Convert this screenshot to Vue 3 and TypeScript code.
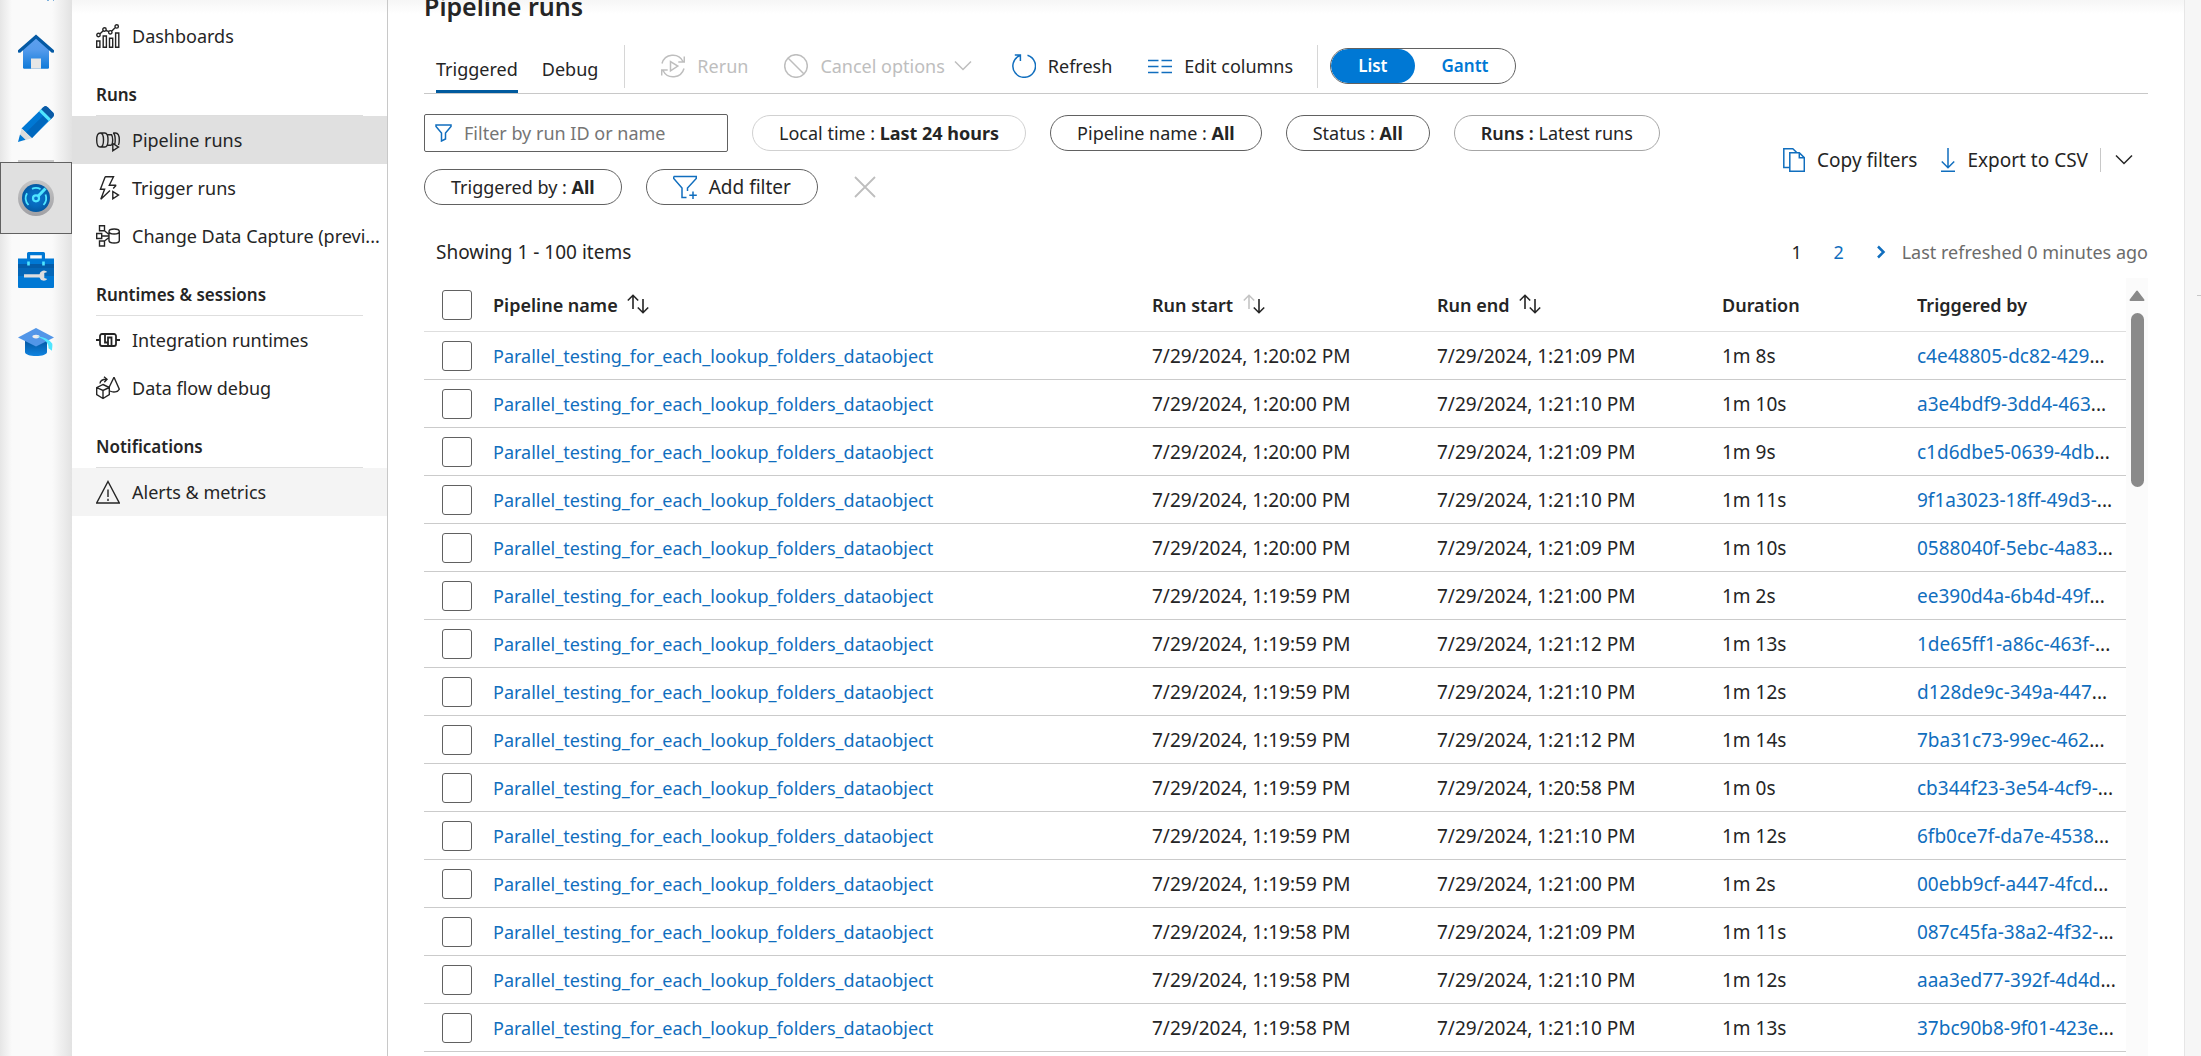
<script setup lang="ts">
import { ref } from 'vue'

interface NavItem {
  label: string
  icon: string
  state?: string
}
interface NavGroup {
  title: string
  items: NavItem[]
}
interface Run {
  start: string
  end: string
  duration: string
  trigger: string
}

const pipeline = 'Parallel_testing_for_each_lookup_folders_dataobject'

const icons: Record<string, string> = {
  dashboards:
    'M.7 17h3.200v6.300H.7zM7.200 12h3.200v11.300H7.200zM13.500 14.300h3.200v9H13.500zM19.600 9h3.200v14.300h-3.200zM4.200 11a1.700 1.700 0 1 1-3.400 0 1.700 1.700 0 0 1 3.400 0zM10.200 5.500a1.700 1.700 0 1 1-3.400 0 1.700 1.700 0 0 1 3.400 0zM16 8.300a1.700 1.700 0 1 1-3.400 0 1.700 1.700 0 0 1 3.400 0zM22.400 2.400a1.700 1.700 0 1 1-3.400 0 1.700 1.700 0 0 1 3.400 0zM3.800 9.900l3.400-3.200M10 6.300l2.800 1.300M15.600 7.200l3.700-3.600',
  pipeline:
    'M4.200 5C6.200 5 7.500 8 7.500 12s-1.300 7-3.300 7S.7 16 .7 12 2.200 5 4.200 5zM4.200 5h4.600c2 0 3.200 3 3.200 7s-1.200 7-3.200 7H4.200M10.800 6.800h5.400M10.800 17.200h4.600M19.500 5h-2.300c1.600.8 2 3.600 2 7 0 1.700-.1 3-.4 4M15.500 6.800c1 1.200 1.200 3 1.200 5.200s-.2 4-1.200 5.200M19.500 5c2.600 0 3.800 3 3.800 7 0 2-.2 3.600-.8 5M16.800 15.500v7.300l5.700-3.700z',
  trigger: 'M9.200.7h8.300l-4.200 8.500h6.900M9.200.7 4.400 13.300h4.200L4.800 23.200 14 14.500M20.200 9.200l-3 3.200M16.800 15.500v7.300l5.700-3.700z',
  capture:
    'M3.500 1.800h5v5h-5zM.7 9.500h5v5h-5zM3.500 17h5v5h-5zM8.500 6.800l4.500 3.700M5.700 12H13M8.500 17l4.500-3.500M13 7.500c0-1.600 2.300-2.500 5.200-2.500s5.100.9 5.100 2.500-2.200 2.500-5.100 2.500S13 9.100 13 7.500v9c0 1.600 2.300 2.500 5.200 2.500s5.100-.9 5.100-2.500v-9',
  integration:
    'M0 12h4M20 12h4M9 6H6a2 2 0 0 0-2 2v8a2 2 0 0 0 2 2h6v-3.500H9zM9 6h6M12 14.500V9.500h3.500V18M12 18h6a2 2 0 0 0 2-2V8a2 2 0 0 0-2-2h-3',
  dataflow:
    'M7 8.500l6.300 3v7L7 22.500l-6.300-3.800v-7zM.7 11.600 7 14.500l6.300-3M7 14.500v8M4 7.500c.2-2.800 2-4.300 6.800-4.200M8 .8l3 2.500L8.300 6.200M18 1.200l-5 10.300M18 1.200l5.300 12c-1.500 3-6 3.600-9.300 1.800',
  alerts: 'M12 1.500 23.300 23H.7zM12 9.500v7.500M12 18.700v2.200',
}

const groups: NavGroup[] = [
  {
    title: 'Runs',
    items: [
      { label: 'Pipeline runs', icon: 'pipeline', state: 'selected' },
      { label: 'Trigger runs', icon: 'trigger' },
      { label: 'Change Data Capture (previ...', icon: 'capture' },
    ],
  },
  {
    title: 'Runtimes & sessions',
    items: [
      { label: 'Integration runtimes', icon: 'integration', state: 'bold-icon' },
      { label: 'Data flow debug', icon: 'dataflow' },
    ],
  },
  {
    title: 'Notifications',
    items: [{ label: 'Alerts & metrics', icon: 'alerts', state: 'hovered' }],
  },
]

const source: [string, string, string, string][] = [
  ['1:20:02', '1:21:09', '1m 8s', 'c4e48805-dc82-429'],
  ['1:20:00', '1:21:10', '1m 10s', 'a3e4bdf9-3dd4-463'],
  ['1:20:00', '1:21:09', '1m 9s', 'c1d6dbe5-0639-4db'],
  ['1:20:00', '1:21:10', '1m 11s', '9f1a3023-18ff-49d3-'],
  ['1:20:00', '1:21:09', '1m 10s', '0588040f-5ebc-4a83'],
  ['1:19:59', '1:21:00', '1m 2s', 'ee390d4a-6b4d-49f'],
  ['1:19:59', '1:21:12', '1m 13s', '1de65ff1-a86c-463f-'],
  ['1:19:59', '1:21:10', '1m 12s', 'd128de9c-349a-447'],
  ['1:19:59', '1:21:12', '1m 14s', '7ba31c73-99ec-462'],
  ['1:19:59', '1:20:58', '1m 0s', 'cb344f23-3e54-4cf9-'],
  ['1:19:59', '1:21:10', '1m 12s', '6fb0ce7f-da7e-4538'],
  ['1:19:59', '1:21:00', '1m 2s', '00ebb9cf-a447-4fcd'],
  ['1:19:58', '1:21:09', '1m 11s', '087c45fa-38a2-4f32-'],
  ['1:19:58', '1:21:10', '1m 12s', 'aaa3ed77-392f-4d4d'],
  ['1:19:58', '1:21:10', '1m 13s', '37bc90b8-9f01-423e'],
]
const runs: Run[] = source.map(([start, end, duration, trigger]) => ({
  start: `7/29/2024, ${start} PM`,
  end: `7/29/2024, ${end} PM`,
  duration,
  trigger,
}))

const filterText = ref('')
const view = ref('List')
</script>

<template>
  <div class="app">
    <nav class="rail" aria-label="Hubs">
      <button class="expand" aria-label="Expand">
        <svg width="36" height="2" viewBox="0 0 36 2"><path d="M29 0h2v1h-2zM35 0h1v1h-1z" fill="#7fb2dd" /></svg>
      </button>
      <button class="hub" aria-label="Home">
        <svg width="36" height="36" viewBox="0 0 36 36">
          <defs>
            <linearGradient id="gHome" x1="0" y1="0" x2="0" y2="1"><stop offset="0" stop-color="#5ea0ef" /><stop offset=".4" stop-color="#559bec" /><stop offset="1" stop-color="#0f7ad8" /></linearGradient>
          </defs>
          <path d="M5 15 18 3l13 12v18.500a1.200 1.200 0 0 1-1.200 1.200H6.200A1.200 1.200 0 0 1 5 33.500z" fill="url(#gHome)" />
          <path d="M18 .4 36 16.200v2.300l-2.200.3L18 4.800 2.200 18.800 0 18.500v-2.300z" fill="#0459a4" />
          <path d="M13 24.500h10v10.200H13z" fill="#e6e6e6" />
        </svg>
      </button>
      <button class="hub" aria-label="Author">
        <svg width="36" height="36" viewBox="0 0 36 36">
          <path d="M3.500 22.500 25 1.500a4 4 0 0 1 5 0l5 5a3.800 3.800 0 0 1 0 4.500L14 32z" fill="#0078d4" />
          <path d="M8 26.500 30.500 4.500l4.500 4.500-21 23z" fill="#0067bd" />
          <path d="M23 3.500 25.500 1a3 3 0 0 1 4 0L35 6.500a3 3 0 0 1 0 4.500l-2.500 2.500z" fill="#0a5aa5" />
          <path d="M21 5.500 23.200 3.200 33 13l-2.200 2.300z" fill="#50e6ff" />
          <path d="M3.600 22.300 14 32.200 6 34.500 1.800 30z" fill="#dcdcdc" />
          <path d="M2 28.500 7.500 33.800 0 36z" fill="#0078d4" />
        </svg>
      </button>
      <span class="rail-line"></span>
      <button class="hub current" aria-label="Monitor">
        <svg width="36" height="36" viewBox="0 0 36 36">
          <defs>
            <linearGradient id="gRing" x1="0" y1="0" x2="0" y2="1"><stop offset="0" stop-color="#c6c6c6" /><stop offset="1" stop-color="#a0a0a4" /></linearGradient>
            <radialGradient id="gDial"><stop offset="0" stop-color="#0b76cf" /><stop offset=".6" stop-color="#0669bb" /><stop offset="1" stop-color="#0459a2" /></radialGradient>
          </defs>
          <circle cx="18" cy="18" r="18" fill="url(#gRing)" />
          <circle cx="18" cy="18" r="14" fill="url(#gDial)" />
          <g fill="none" stroke="#50e6ff">
            <path d="M10.500 25A10.200 10.200 0 0 1 9 13.200M14 8.800a10.200 10.200 0 0 1 8.500.3M27.500 14.500A10.200 10.200 0 0 1 25.500 25" stroke-width="1.800" />
            <circle cx="18" cy="18.300" r="3" stroke-width="2.200" />
            <path d="M20 16.300 27.500 8.500" stroke-width="3" />
          </g>
        </svg>
      </button>
      <button class="hub" aria-label="Manage">
        <svg width="36" height="36" viewBox="0 0 36 36">
          <path d="M9 7V1.500A1.500 1.500 0 0 1 10.500 0h15A1.500 1.500 0 0 1 27 1.500V7h-3.200V3.200H12.200V7z" fill="#0078d4" />
          <path d="M0 6.500h36V35a1 1 0 0 1-1 1H1a1 1 0 0 1-1-1z" fill="#0078d4" />
          <path d="M0 12h36v12H0z" fill="#0467b8" />
          <path d="M0 12h36v4H0z" fill="#045ca8" />
          <path d="M9.200 9.500h2.600v4H9.200zM24.200 9.500h2.600v4h-2.600z" fill="#50e6ff" />
          <path d="M6 22.200h15.500a4.500 4.500 0 0 1 7.800-2.200l-3 1v5l3 1a4.500 4.500 0 0 1-7.800-1.500H6z" fill="#dedede" />
        </svg>
      </button>
      <button class="hub" aria-label="Learning center">
        <svg width="36" height="36" viewBox="0 0 36 36">
          <defs>
            <linearGradient id="gCap" x1="0" y1="0" x2="0" y2="1"><stop offset="0" stop-color="#0459a4" /><stop offset="1" stop-color="#0f83e0" /></linearGradient>
          </defs>
          <path d="M7 17h22v11c0 2.500-5 4-11 4S7 30.500 7 28z" fill="url(#gCap)" />
          <path d="M18 4 36 13.500 18 22.500 0 13.500z" fill="#5296e8" />
          <ellipse cx="18" cy="12.600" rx="3.600" ry="1.800" fill="#eee" />
          <path d="M18.500 12.400c7 .2 13 3 15.800 7.300.4 2.500-.3 4.300-.3 7l-3.500-2.500c.5-4.500-3-9.500-12-11.800z" fill="#50e6ff" />
        </svg>
      </button>
    </nav>

    <nav class="side" aria-label="Monitor">
      <a href="#" class="side-link">
        <svg class="side-icon" viewBox="0 0 24 24"><path :d="icons.dashboards" /></svg>
        <span>Dashboards</span>
      </a>
      <section v-for="group in groups" :key="group.title">
        <h2>{{ group.title }}</h2>
        <a v-for="item in group.items" :key="item.label" href="#" class="side-link" :class="item.state">
          <svg class="side-icon" viewBox="0 0 24 24"><path :d="icons[item.icon]" /></svg>
          <span>{{ item.label }}</span>
        </a>
      </section>
    </nav>

    <main class="main">
      <h1><span>Pipeline runs</span></h1>

      <div class="toolbar">
        <div class="tabs" role="tablist">
          <button role="tab" class="tab active" aria-selected="true">Triggered</button>
          <button role="tab" class="tab" aria-selected="false">Debug</button>
        </div>
        <span class="divider"></span>
        <div class="commands">
          <button class="command" disabled>
            <svg width="24" height="24" viewBox="0 0 24 24"><path d="M1 9.500A11.300 11.300 0 0 1 22 7.500M23.300 2.500V8h-6M23 14.500A11.300 11.300 0 0 1 2 16.500M.7 21.500V16h6M9.500 7.500v9.300l7.300-4.700z" /></svg>
            <span>Rerun</span>
          </button>
          <button class="command" disabled>
            <svg width="24" height="24" viewBox="0 0 24 24"><path d="M23.300 12a11.300 11.300 0 1 1-22.600 0 11.300 11.300 0 0 1 22.600 0zM4 4l16 16" /></svg>
            <span>Cancel options</span>
            <svg class="caret" width="18" height="12" viewBox="0 0 18 12"><path d="M1 1.500 9 9.500l8-8" /></svg>
          </button>
          <button class="command accent">
            <svg width="24" height="24" viewBox="0 0 24 24"><path d="M15.500 1.200A11.300 11.300 0 1 1 8 1.500M2.800 1h5.600v6" /></svg>
            <span>Refresh</span>
          </button>
          <button class="command accent">
            <svg width="24" height="24" viewBox="0 0 24 24"><path d="M0 6.500h10.500M13.500 6.500H24M0 12.500h10.500M13.500 12.500H24M0 18.500h10.500M13.500 18.500H24" /></svg>
            <span>Edit columns</span>
          </button>
        </div>
        <span class="divider"></span>
        <div class="switch">
          <button v-for="name in ['List', 'Gantt']" :key="name" :class="{ on: view === name }" @click="view = name">{{ name }}</button>
        </div>
      </div>

      <div class="filters">
        <div class="pills">
          <label class="search">
            <svg width="17" height="18" viewBox="0 0 17 18"><path d="M1 1h15v1.500L10.500 9v6L6.500 17V9L1 2.500z" /></svg>
            <input v-model="filterText" type="text" placeholder="Filter by run ID or name" aria-label="Filter by run ID or name" />
          </label>
          <button class="pill light">Local time : <b>Last 24 hours</b></button>
          <button class="pill">Pipeline name : <b>All</b></button>
          <button class="pill">Status : <b>All</b></button>
          <button class="pill medium"><strong>Runs :</strong> Latest runs</button>
          <button class="pill">Triggered by : <b>All</b></button>
          <button class="pill add">
            <svg width="24" height="24" viewBox="0 0 24 24"><path d="M.7 1.500h22.600v2L14.500 13v3M.7 1.500v2L9 13v9.500h4.500M20 16.500V24M16.300 20.200h7.500" /></svg>
            <span>Add filter</span>
          </button>
          <button class="clear" aria-label="Clear filters">
            <svg width="22" height="22" viewBox="0 0 22 22"><path d="M1 1l20 20M21 1 1 21" /></svg>
          </button>
        </div>
        <div class="actions">
          <button class="command accent copy">
            <svg width="22" height="24" viewBox="0 0 22 24"><path d="M6.500 19.500H.8V.8h9l3.700 3.500M6.800 4.700h9.500l5 5v13.600H6.800zM16.300 4.700v5h5" /></svg>
            <span>Copy filters</span>
          </button>
          <button class="command accent export">
            <svg width="14" height="24" viewBox="0 0 14 24"><path d="M7 0v19.500M.8 13.500 7 19.800l6.200-6.300M0 23.200h14" /></svg>
            <span>Export to CSV</span>
          </button>
          <span class="short-divider"></span>
          <button class="more" aria-label="More export options">
            <svg width="18" height="12" viewBox="0 0 18 12"><path d="M1 1.500 9 9.500l8-8" /></svg>
          </button>
        </div>
      </div>

      <div class="pager">
        <span class="count">Showing 1 - 100 items</span>
        <span class="page">1</span>
        <a href="#" class="page">2</a>
        <a href="#" class="next" aria-label="Next page">
          <svg width="10" height="14" viewBox="0 0 10 14"><path d="M2 1.500 7.500 7 2 12.500" /></svg>
        </a>
        <span class="refreshed">Last refreshed 0 minutes ago</span>
      </div>

      <div class="grid">
        <table>
          <colgroup>
            <col class="c-check" />
            <col />
            <col class="c-time" />
            <col class="c-time" />
            <col class="c-duration" />
            <col class="c-trigger" />
          </colgroup>
          <thead>
            <tr>
              <th class="check"><input type="checkbox" aria-label="Select all runs" /></th>
              <th>
                Pipeline name
                <svg class="sort" viewBox="0 0 22 20"><path d="M6 15V1.500M.8 6.500 6 1.300l5.200 5.200M16 5v13.500M10.800 13.500 16 18.700l5.200-5.200" /></svg>
              </th>
              <th>
                Run start
                <svg class="sort" viewBox="0 0 22 20"><path class="faint" d="M6 15V1.500M.8 6.500 6 1.300l5.200 5.200" /><path d="M16 5v13.500M10.800 13.500 16 18.700l5.200-5.200" /></svg>
              </th>
              <th>
                Run end
                <svg class="sort" viewBox="0 0 22 20"><path d="M6 15V1.500M.8 6.500 6 1.300l5.200 5.200M16 5v13.500M10.800 13.500 16 18.700l5.200-5.200" /></svg>
              </th>
              <th>Duration</th>
              <th>Triggered by</th>
            </tr>
          </thead>
          <tbody>
            <tr v-for="run in runs" :key="run.trigger">
              <td class="check"><input type="checkbox" :aria-label="'Select run ' + run.trigger" /></td>
              <td><a href="#">{{ pipeline }}</a></td>
              <td class="num">{{ run.start }}</td>
              <td class="num">{{ run.end }}</td>
              <td class="num">{{ run.duration }}</td>
              <td class="num"><a href="#">{{ run.trigger }}</a>...</td>
            </tr>
          </tbody>
        </table>
        <div class="scrollbar" aria-hidden="true">
          <svg width="16" height="12" viewBox="0 0 16 12"><path d="M8 1.500 14.500 10h-13z" fill="#8a8a8a" stroke="#8a8a8a" stroke-width="2" stroke-linejoin="round" /></svg>
          <span class="thumb"></span>
        </div>
      </div>
    </main>
    <aside class="edge"><span></span></aside>
  </div>
</template>

<style>
body {
  background: #fff;
  overflow: hidden;
}
</style>

<style scoped>
.app {
  --ink: #252525;
  --link: #106ebe;
  --gray: #bebebe;
  display: flex;
  height: 100vh;
  overflow: hidden;
  font-family: "Noto Sans", "Open Sans", sans-serif;
  font-size: 18px;
  line-height: 24px;
  color: var(--ink);
  background: linear-gradient(#f6f6f6, #fff 14px);
}
* {
  box-sizing: border-box;
}
button {
  font: inherit;
  color: inherit;
  background: none;
  border: 0;
  padding: 0;
  margin: 0;
  white-space: nowrap;
}
a {
  color: var(--link);
  text-decoration: none;
}
svg {
  display: block;
  flex: none;
}

.rail {
  flex: none;
  width: 72px;
  display: flex;
  flex-direction: column;
  align-items: center;
  background: linear-gradient(to right, #e6e6e6, #fafafa 12px, #fafafa 52px, #e2e2e2);
}
.expand {
  height: 16px;
  display: flex;
}
.hub {
  width: 72px;
  height: 72px;
  display: flex;
  align-items: center;
  justify-content: center;
}
.hub.current {
  background: #e0e0e0;
  border: 1px solid #616161;
}
.rail-line {
  width: 36px;
  height: 2px;
  background: #c8c8c8;
}

.side {
  flex: none;
  width: 316px;
  padding-top: 12px;
  border-right: 1px solid #c8c8c8;
}
.side-link {
  display: flex;
  align-items: center;
  gap: 12px;
  height: 48px;
  padding-left: 24px;
  color: var(--ink);
  white-space: nowrap;
}
.side-link.selected {
  background: #e0e0e0;
}
.side-link.hovered {
  background: #f4f4f4;
}
.side-icon {
  width: 24px;
  height: 24px;
  fill: none;
  stroke: var(--ink);
  stroke-width: 1.4;
}
.bold-icon .side-icon {
  stroke-width: 1.8;
}
h2 {
  margin: 0 24px;
  height: 56px;
  padding-top: 23px;
  border-bottom: 1px solid #dedede;
  font-size: 17px;
  font-weight: 600;
}

.main {
  flex: 1;
  min-width: 0;
  display: flex;
  flex-direction: column;
  padding: 0 36px;
}
h1 {
  flex: none;
  display: flex;
  align-items: flex-end;
  height: 24px;
  margin: 0 0 18px;
  overflow: hidden;
  font-size: 25px;
  font-weight: 600;
  line-height: 36px;
}

.toolbar {
  flex: none;
  display: flex;
  align-items: center;
  height: 52px;
  border-bottom: 1px solid #c8c8c8;
}
.tabs {
  align-self: stretch;
  display: flex;
  gap: 24px;
  padding: 0 26px 0 12px;
}
.tab {
  padding-top: 6px;
  border-bottom: 3px solid transparent;
}
.tab.active {
  border-color: #005a9e;
}
.divider {
  width: 1px;
  height: 43px;
  margin-bottom: 3px;
  background: #d6d6d6;
}
.commands {
  display: flex;
  gap: 36px;
  margin-bottom: 3px;
  padding: 0 24px 0 36px;
}
.command {
  display: flex;
  align-items: center;
  gap: 12px;
}
.command svg,
.more svg {
  fill: none;
  stroke: currentColor;
  stroke-width: 1.5;
}
.command:disabled {
  color: var(--gray);
}
.command .caret {
  margin: 0 4px 0 -3px;
}
.accent svg {
  color: var(--link);
}
.switch {
  display: flex;
  height: 36px;
  margin: 0 0 3px 12px;
  border: 1px solid #616161;
  border-radius: 18px;
  overflow: hidden;
}
.switch button {
  padding: 0 27px;
  border-radius: 17px;
  font-size: 17px;
  font-weight: 600;
  color: #0078d4;
}
.switch .on {
  background: #0078d4;
  color: #fff;
}

.filters {
  flex: none;
  display: flex;
  align-items: center;
  padding-top: 20px;
}
.pills {
  flex: 1;
  min-width: 0;
  display: flex;
  flex-wrap: wrap;
  align-items: center;
  gap: 17px 24px;
}
.search {
  display: flex;
  align-items: center;
  gap: 12px;
  width: 304px;
  height: 38px;
  padding: 0 10px;
  border: 1px solid #616161;
  border-radius: 2px;
}
.search svg,
.add svg {
  fill: none;
  stroke: var(--link);
  stroke-width: 1.5;
}
.search input {
  flex: 1;
  min-width: 0;
  padding: 0;
  border: 0;
  outline: 0;
  background: none;
  font: inherit;
  color: inherit;
}
.search input::placeholder {
  color: #757575;
}
.pill {
  height: 36px;
  padding: 0 26px;
  border: 1px solid #616161;
  border-radius: 18px;
}
.pill.light {
  border-color: #d1d1d1;
}
.pill.medium {
  border-color: #a6a6a6;
}
.pill strong {
  font-weight: 600;
}
.add {
  display: flex;
  align-items: center;
  gap: 12px;
  font-size: 19px;
}
.clear {
  padding: 0 12px;
}
.clear svg {
  fill: none;
  stroke: #bebebe;
  stroke-width: 1.8;
}
.actions {
  flex: none;
  display: flex;
  align-items: center;
  font-size: 19px;
}
.export {
  margin-left: 24px;
}
.short-divider {
  width: 1px;
  height: 24px;
  margin: 0 14px 0 12px;
  background: #c8c8c8;
}
.more {
  padding-right: 15px;
}

.pager {
  flex: none;
  display: flex;
  align-items: center;
  height: 73px;
  padding: 20px 0 0 12px;
}
.count {
  flex: 1;
  font-size: 19px;
}
.page {
  width: 42px;
  text-align: center;
}
.next {
  padding: 0 16px;
}
.next svg {
  fill: none;
  stroke: var(--link);
  stroke-width: 2.5;
}
.refreshed {
  color: #6b6b6b;
}

.grid {
  flex: 1;
  min-height: 0;
  display: flex;
  align-items: stretch;
  overflow: hidden;
}
table {
  flex: 1;
  min-width: 0;
  align-self: flex-start;
  table-layout: fixed;
  border-collapse: separate;
  border-spacing: 0;
}
.c-check {
  width: 69px;
}
.c-time {
  width: 285px;
}
.c-duration {
  width: 195px;
}
.c-trigger {
  width: 209px;
}
th,
td {
  padding: 0;
  text-align: left;
  white-space: nowrap;
  overflow: hidden;
}
th {
  height: 54px;
  border-bottom: 1px solid #dedede;
  font-weight: 600;
}
td {
  height: 48px;
  border-bottom: 1px solid #cbcbcb;
}
.num {
  font-size: 19px;
}
.check {
  padding-left: 18px;
}
.check input {
  appearance: none;
  display: block;
  width: 30px;
  height: 30px;
  margin: 0;
  border: 1px solid #616161;
  border-radius: 3px;
}
.sort {
  display: inline-block;
  width: 22px;
  height: 20px;
  margin-left: 5px;
  vertical-align: -2px;
  fill: none;
  stroke: var(--ink);
  stroke-width: 1.6;
}
.faint {
  stroke: #c4c4c4;
}
.scrollbar {
  flex: none;
  width: 22px;
  display: flex;
  flex-direction: column;
  align-items: center;
  gap: 11px;
  padding-top: 12px;
  background: #fbfbfb;
}
.thumb {
  width: 13px;
  height: 174px;
  border-radius: 7px;
  background: #8a8a8a;
}

.edge {
  flex: none;
  width: 17px;
  padding: 295px 0 0 12px;
  border-left: 1px solid #e6e6e6;
  background: #f6f6f6;
}
.edge span {
  display: block;
  height: 1px;
  background: #c8c8c8;
}
</style>
